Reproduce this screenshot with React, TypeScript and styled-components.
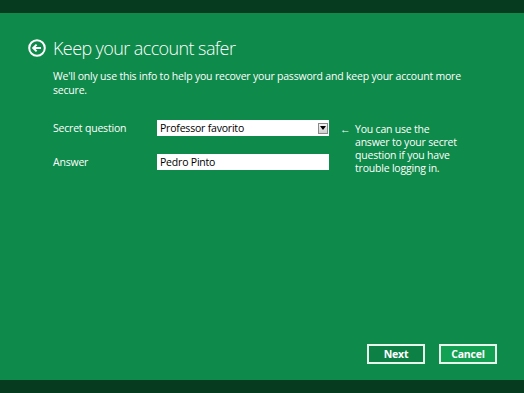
import React from 'react';
import styled, { createGlobalStyle } from 'styled-components';

const GlobalStyle = createGlobalStyle`
    html, body {
        margin: 0;
        padding: 0;
        height: 100%;
    }
    body {
        font-family: 'Open Sans', 'Noto Sans', sans-serif;
        background: #0e8a4a;
        color: #ffffff;
    }
    #root {
        height: 100%;
    }
`;

const Screen = styled.div`
    display: flex;
    flex-direction: column;
    height: 393px;
    width: 524px;
    overflow: hidden;
`;

const Band = styled.div`
    height: 13px;
    flex-shrink: 0;
    background: #063b1f;
`;

const Main = styled.div`
    flex: 1;
    display: flex;
    flex-direction: column;
    padding: 26px 27px 16px 28px;
    background: #0e8a4a;
`;

const Header = styled.div`
    display: flex;
    align-items: center;
    gap: 7px;
    height: 18px;
`;

const BackButton = styled.button`
    width: 18px;
    height: 18px;
    padding: 0;
    border: none;
    background: none;
    display: flex;
    cursor: pointer;
`;

const Title = styled.h1`
    margin: 0;
    font-size: 18px;
    font-weight: 300;
    letter-spacing: -0.6px;
    line-height: 18px;
`;

const Body = styled.div`
    padding-left: 25px;
`;

const Intro = styled.p`
    margin: 12px 0 0;
    width: 425px;
    font-size: 10.5px;
    letter-spacing: -0.2px;
    line-height: 14px;
`;

const FormRow = styled.div`
    display: flex;
    align-items: flex-start;
    margin-top: 23px;
`;

const Fields = styled.div`
    display: flex;
    flex-direction: column;
    gap: 18px;
`;

const Field = styled.div`
    display: flex;
    align-items: center;
    height: 16px;
`;

const Label = styled.label`
    width: 104px;
    font-size: 10.5px;
    letter-spacing: -0.2px;
`;

const Box = styled.div`
    width: 172px;
    height: 16px;
    box-sizing: border-box;
    background: #ffffff;
    color: #000000;
    font-size: 10.5px;
    letter-spacing: -0.2px;
    line-height: 14px;
    padding: 0 3px;
    display: flex;
    align-items: center;
    justify-content: space-between;
`;

const DropButton = styled.span`
    width: 10px;
    height: 11px;
    margin-right: -2px;
    box-sizing: border-box;
    border: 1px solid #8a8a8a;
    background: linear-gradient(#f4f4f4, #cfcfcf);
    display: flex;
    align-items: center;
    justify-content: center;
`;

const Hint = styled.div`
    display: flex;
    margin-left: 11px;
    margin-top: 3px;
    font-size: 10.5px;
    letter-spacing: -0.2px;
    line-height: 13px;
`;

const HintArrow = styled.span`
    width: 15px;
    font-weight: 700;
`;

const HintText = styled.p`
    margin: 0;
    width: 108px;
`;

const Footer = styled.div`
    margin-top: auto;
    display: flex;
    justify-content: flex-end;
    gap: 14px;
`;

const ActionButton = styled.button<{ $primary?: boolean }>`
    width: 58px;
    height: 20px;
    box-sizing: border-box;
    border: 2px solid #e8f5ec;
    background: ${(p) => (p.$primary ? '#0c8045' : '#12a053')};
    color: #ffffff;
    font-family: 'Open Sans', 'Noto Sans', sans-serif;
    font-size: 10.5px;
    font-weight: 700;
    letter-spacing: -0.2px;
    padding: 0;
    cursor: pointer;
`;

const BackIcon = () => (
    <svg width="18" height="18" viewBox="0 0 18 18">
        <circle cx="9" cy="9" r="7.8" fill="none" stroke="#fff" strokeWidth="2" />
        <path d="M13 9H5.5M8.6 5.6 5.2 9l3.4 3.4" fill="none" stroke="#fff" strokeWidth="2" />
    </svg>
);

const Caret = () => (
    <svg width="6" height="4" viewBox="0 0 6 4">
        <path d="M0 0h6L3 4z" fill="#000" />
    </svg>
);

export default function App() {
    return (
        <>
            <GlobalStyle />
            <Screen>
                <Band />
                <Main>
                    <Header>
                        <BackButton aria-label="Back">
                            <BackIcon />
                        </BackButton>
                        <Title>Keep your account safer</Title>
                    </Header>
                    <Body>
                        <Intro>
                            We'll only use this info to help you recover your password and keep your account more
                            secure.
                        </Intro>
                        <FormRow>
                            <Fields>
                                <Field>
                                    <Label>Secret question</Label>
                                    <Box>
                                        <span>Professor favorito</span>
                                        <DropButton>
                                            <Caret />
                                        </DropButton>
                                    </Box>
                                </Field>
                                <Field>
                                    <Label>Answer</Label>
                                    <Box>
                                        <span>Pedro Pinto</span>
                                    </Box>
                                </Field>
                            </Fields>
                            <Hint>
                                <HintArrow>←</HintArrow>
                                <HintText>
                                    You can use the answer to your secret question if you have trouble logging in.
                                </HintText>
                            </Hint>
                        </FormRow>
                    </Body>
                    <Footer>
                        <ActionButton $primary>Next</ActionButton>
                        <ActionButton>Cancel</ActionButton>
                    </Footer>
                </Main>
                <Band />
            </Screen>
        </>
    );
}
